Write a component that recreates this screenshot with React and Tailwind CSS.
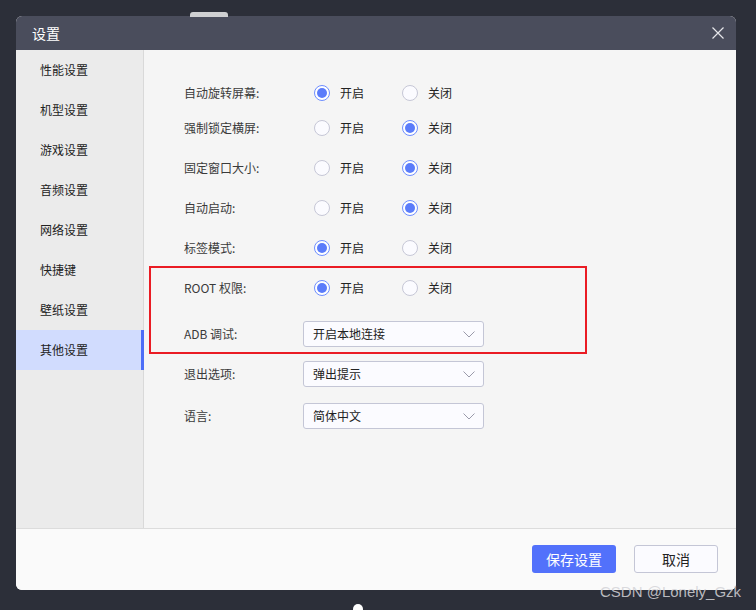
import React from "react";

const font = { fontFamily: '"Noto Sans CJK SC", "Noto Sans", sans-serif' };

function Radio({ checked }) {
  return checked ? (
    <span className="w-4 h-4 rounded-full border border-[#6d8dff] bg-white flex items-center justify-center shrink-0">
      <span className="w-[10px] h-[10px] rounded-full bg-[#5b7cfa]" />
    </span>
  ) : (
    <span className="w-4 h-4 rounded-full border border-[#c6c7d6] bg-[#fbfbff] shrink-0" />
  );
}

function RadioRow({ label, on, h }) {
  return (
    <div className={`flex items-center ${h}`}>
      <div className="w-[130px] text-[12px] text-[#3a3a3a]">{label}</div>
      <div className="flex items-center w-[88px]">
        <Radio checked={on} />
        <span className="ml-[10px] text-[12px] text-[#222]">开启</span>
      </div>
      <div className="flex items-center">
        <Radio checked={!on} />
        <span className="ml-[10px] text-[12px] text-[#222]">关闭</span>
      </div>
    </div>
  );
}

function Select({ value }) {
  return (
    <div className="w-[181px] h-[26px] border border-[#c4c6d6] rounded-[3px] bg-[#fbfbff] flex items-center justify-between pl-[9px] pr-[8px]">
      <span className="text-[12px] text-[#222]">{value}</span>
      <svg width="12" height="7" viewBox="0 0 12 7" fill="none">
        <path d="M0.5 0.5 L6 6 L11.5 0.5" stroke="#9a9aaa" strokeWidth="1" />
      </svg>
    </div>
  );
}

function SelectRow({ label, value, h }) {
  return (
    <div className={`flex items-center ${h}`}>
      <div className="w-[119px] text-[12px] text-[#3a3a3a]">{label}</div>
      <Select value={value} />
    </div>
  );
}

export default function App() {
  const items = ["性能设置", "机型设置", "游戏设置", "音频设置", "网络设置", "快捷键", "壁纸设置", "其他设置"];
  return (
    <div className="w-[756px] h-[610px] bg-[#2c2f39] relative overflow-hidden" style={font}>
      <div className="absolute left-[190px] top-[12px] w-[38px] h-[5px] bg-[#cfd0d2] rounded-t-[3px]" />
      <div className="absolute left-[353px] top-[604px] w-[10px] h-[10px] rounded-full bg-white" />
      <div className="pt-[16px] pl-[16px]">
        <div className="w-[720px] h-[574px] rounded-[6px] overflow-hidden flex flex-col bg-[#fafafa]">
          <div className="h-[34px] bg-[#4a4d5c] flex items-center justify-between pl-[16px] pr-[12px] shrink-0">
            <span className="text-[14px] text-white">设置</span>
            <svg width="12" height="12" viewBox="0 0 12 12">
              <path d="M0.5 0.5 L11.5 11.5 M11.5 0.5 L0.5 11.5" stroke="#e6e6ea" strokeWidth="1.2" />
            </svg>
          </div>
          <div className="flex h-[479px] border-b border-[#dcdcdc]">
            <div className="w-[128px] bg-[#ebebeb] border-r border-[#d9d9d9] flex flex-col">
              {items.map((t, i) => (
                <div
                  key={t}
                  className={`h-10 flex items-center pl-[24px] text-[12px] text-[#222] ${i === 7 ? "bg-[#d1dcfe] border-r-[3px] border-[#4d6ef7] -mr-px" : ""}`}
                >
                  {t}
                </div>
              ))}
            </div>
            <div className="flex-1 bg-[#f5f5f5] pl-[40px] pt-[28px] relative">
              <div className="absolute left-[5px] top-[216px] w-[438px] h-[88px] border-2 border-[#ea1c24]" />
              <RadioRow label="自动旋转屏幕:" on={true} h="h-[30px]" />
              <RadioRow label="强制锁定横屏:" on={false} h="h-[40px]" />
              <RadioRow label="固定窗口大小:" on={false} h="h-[40px]" />
              <RadioRow label="自动启动:" on={false} h="h-[40px]" />
              <RadioRow label="标签模式:" on={true} h="h-[40px]" />
              <RadioRow label="ROOT 权限:" on={true} h="h-[40px]" />
              <div className="h-[6px]" />
              <SelectRow label="ADB 调试:" value="开启本地连接" h="h-[40px]" />
              <SelectRow label="退出选项:" value="弹出提示" h="h-[40px]" />
              <SelectRow label="语言:" value="简体中文" h="h-[44px]" />
            </div>
          </div>
          <div className="flex-1 bg-[#fafafa] flex items-start justify-end pt-[16px] pr-[18px] gap-[18px]">
            <button className="w-[84px] h-[28px] rounded-[3px] bg-[#5271fb] text-white text-[14px]">保存设置</button>
            <button className="w-[84px] h-[28px] rounded-[3px] bg-[#fbfbff] border border-[#c4c6d6] text-[#222] text-[14px]">取消</button>
          </div>
        </div>
      </div>
      <div className="absolute left-[600px] top-[581px] text-[15px] text-[#d4d4d8]/85" style={{ fontFamily: '"Liberation Sans", sans-serif' }}>
        CSDN @Lonely_Gzk
      </div>
    </div>
  );
}
